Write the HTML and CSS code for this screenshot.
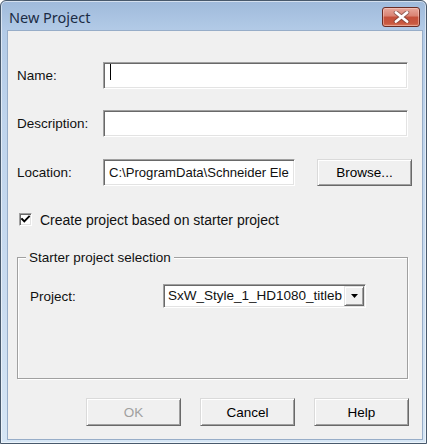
FILE: index.html
```html
<!DOCTYPE html>
<html>
<head>
<meta charset="utf-8">
<link rel="stylesheet" href="styles.css">
</head>
<body>
<div class="window">
  <div class="titlebar">
    <span class="title">New Project</span>
    <div class="close">
      <svg width="17" height="12" viewBox="0 0 17 12">
        <path d="M3 1.5 L14 10.5 M14 1.5 L3 10.5" stroke="#5b3a36" stroke-width="4.6" stroke-linecap="round" fill="none" opacity="0.55"/>
        <path d="M3 1.5 L14 10.5 M14 1.5 L3 10.5" stroke="#ffffff" stroke-width="2.8" stroke-linecap="round" fill="none"/>
      </svg>
    </div>
  </div>
  <div class="client">
    <div class="row row-name">
      <span class="lbl">Name:</span>
      <div class="field"><span class="caret"></span></div>
    </div>
    <div class="row row-desc">
      <span class="lbl">Description:</span>
      <div class="field"></div>
    </div>
    <div class="row row-loc">
      <span class="lbl">Location:</span>
      <div class="field loc"><span class="field-text">C:\ProgramData\Schneider Ele</span></div>
      <div class="btn browse">Browse...</div>
    </div>
    <div class="check-row">
      <span class="checkbox">
        <svg width="11" height="11" viewBox="0 0 11 11">
          <path d="M2 5 L4.3 7.4 L9 2.6" stroke="#000" stroke-width="1.9" fill="none" stroke-linecap="square"/>
        </svg>
      </span>
      <span class="check-label">Create project based on starter project</span>
    </div>
    <fieldset class="group">
      <legend>Starter project selection</legend>
      <div class="combo-row">
        <span class="lbl2">Project:</span>
        <div class="combo">
          <span class="combo-text">SxW_Style_1_HD1080_titleb</span>
          <span class="combo-btn">
            <svg width="7" height="4" viewBox="0 0 7 4"><path d="M0 0 H7 L3.5 4 Z" fill="#000"/></svg>
          </span>
        </div>
      </div>
    </fieldset>
    <div class="buttons">
      <div class="btn disabled">OK</div>
      <div class="btn">Cancel</div>
      <div class="btn">Help</div>
    </div>
  </div>
</div>
</body>
</html>
```
FILE: styles.css
```css
html, body {
  margin: 0;
  padding: 0;
}
body {
  width: 427px;
  height: 444px;
  overflow: hidden;
  background: #ffffff;
  font-family: "Liberation Sans", Arial, sans-serif;
  font-size: 13.5px;
  color: #111;
}
.window {
  box-sizing: border-box;
  width: 427px;
  height: 444px;
  display: flex;
  flex-direction: column;
  border: 1px solid #48596c;
  border-radius: 6px 6px 0 0;
  padding: 0 4px 4px 7px;
  background: linear-gradient(#9fbadb 0px, #b3cbe7 30px, #bfd4ec 120px, #cadcf0 300px, #d6e6f5 100%);
  box-shadow: inset 0 0 0 1px rgba(255,255,255,0.55);
}
.titlebar {
  height: 30px;
  display: flex;
  align-items: flex-start;
  flex-shrink: 0;
}
.title {
  font-family: "Noto Sans", "Open Sans", sans-serif;
  font-size: 14.5px;
  line-height: 20px;
  color: #1b2c45;
  margin: 6px 0 0 1px;
}
.close {
  margin: 6px 2px 0 auto;
  width: 38px;
  height: 20px;
  box-sizing: border-box;
  border: 1px solid #6b2c24;
  border-radius: 3px;
  background: linear-gradient(#e8a89c 0%, #d98272 45%, #c5503b 50%, #c9583f 85%, #d97a5e 100%);
  box-shadow: inset 0 0 0 1px rgba(255,220,210,0.45);
  display: flex;
  align-items: center;
  justify-content: center;
}
.close svg { display: block; }
.client {
  flex: 1;
  background: #f0f0f0;
  padding: 31px 14px 0 9px;
  box-shadow: 0 0 0 1px #97adc8;
}
.row {
  display: flex;
  align-items: center;
  height: 27px;
}
.row-name { margin-bottom: 21px; }
.row-desc { margin-bottom: 22px; }
.lbl {
  width: 86px;
  flex-shrink: 0;
}
.field {
  flex: 1;
  height: 27px;
  box-sizing: border-box;
  background: #fff;
  border: 1px solid;
  border-color: #a0a0a0 #ffffff #ffffff #a0a0a0;
  box-shadow: inset 1px 1px 0 #696969, inset -1px -1px 0 #e3e3e3;
  display: flex;
  align-items: center;
  padding-left: 5px;
  overflow: hidden;
}
.caret {
  align-self: flex-start;
  margin: 1px 0 0 1px;
  width: 1px;
  height: 16px;
  background: #000;
}
.loc {
  flex: none;
  width: 192px;
  font-size: 13.1px;
}
.field-text {
  white-space: nowrap;
  overflow: hidden;
  min-width: 0;
  flex: 1;
}
.btn {
  box-sizing: border-box;
  width: 95px;
  height: 28px;
  flex-shrink: 0;
  display: flex;
  align-items: center;
  justify-content: center;
  background: #f0f0f0;
  border: 1px solid;
  border-color: #dadada #696969 #696969 #dadada;
  box-shadow: inset 1px 1px 0 #ffffff, inset -1px -1px 0 #a0a0a0;
  color: #000;
}
.browse {
  margin-left: 22px;
  height: 27px;
}
.disabled {
  color: #a0a0a0;
}
.check-row {
  margin-top: 26px;
  height: 15px;
  display: flex;
  align-items: center;
}
.checkbox {
  box-sizing: border-box;
  width: 13px;
  height: 13px;
  margin-left: 2px;
  background: #fff;
  border: 1px solid;
  border-color: #a0a0a0 #ffffff #ffffff #a0a0a0;
  box-shadow: inset 1px 1px 0 #696969, inset -1px -1px 0 #e3e3e3;
  display: flex;
  align-items: center;
  justify-content: center;
}
.checkbox svg { display: block; }
.check-label {
  margin-left: 8px;
  font-size: 14px;
}
.group {
  box-sizing: border-box;
  margin: 23px 0 0 0;
  padding: 0;
  height: 129px;
  min-width: 0;
  border: 1px solid #a0a0a0;
  box-shadow: inset 1px 1px 0 #ffffff, 1px 1px 0 #ffffff;
}
.group legend {
  margin-left: 8px;
  padding: 0 3px;
  line-height: 15px;
  background: #f0f0f0;
}
.combo-row {
  margin-top: 19px;
  padding-left: 12px;
  display: flex;
  align-items: center;
}
.lbl2 {
  width: 133px;
  flex-shrink: 0;
}
.combo {
  box-sizing: border-box;
  width: 203px;
  height: 24px;
  background: #fff;
  border: 1px solid;
  border-color: #a0a0a0 #ffffff #ffffff #a0a0a0;
  box-shadow: inset 1px 1px 0 #696969, inset -1px -1px 0 #e3e3e3;
  display: flex;
  align-items: center;
  padding: 1px 1px 1px 2px;
}
.combo-text {
  flex: 1;
  min-width: 0;
  overflow: hidden;
  white-space: nowrap;
  padding-left: 2px;
  line-height: 20px;
}
.combo-btn {
  box-sizing: border-box;
  width: 20px;
  height: 20px;
  flex-shrink: 0;
  background: #f0f0f0;
  border: 1px solid;
  border-color: #e3e3e3 #696969 #696969 #e3e3e3;
  box-shadow: inset 1px 1px 0 #ffffff, inset -1px -1px 0 #a0a0a0;
  display: flex;
  align-items: center;
  justify-content: center;
}
.combo-btn svg { display: block; }
.buttons {
  margin-top: 19px;
  margin-right: -1px;
  display: flex;
  justify-content: flex-end;
  gap: 19px;
}
```
